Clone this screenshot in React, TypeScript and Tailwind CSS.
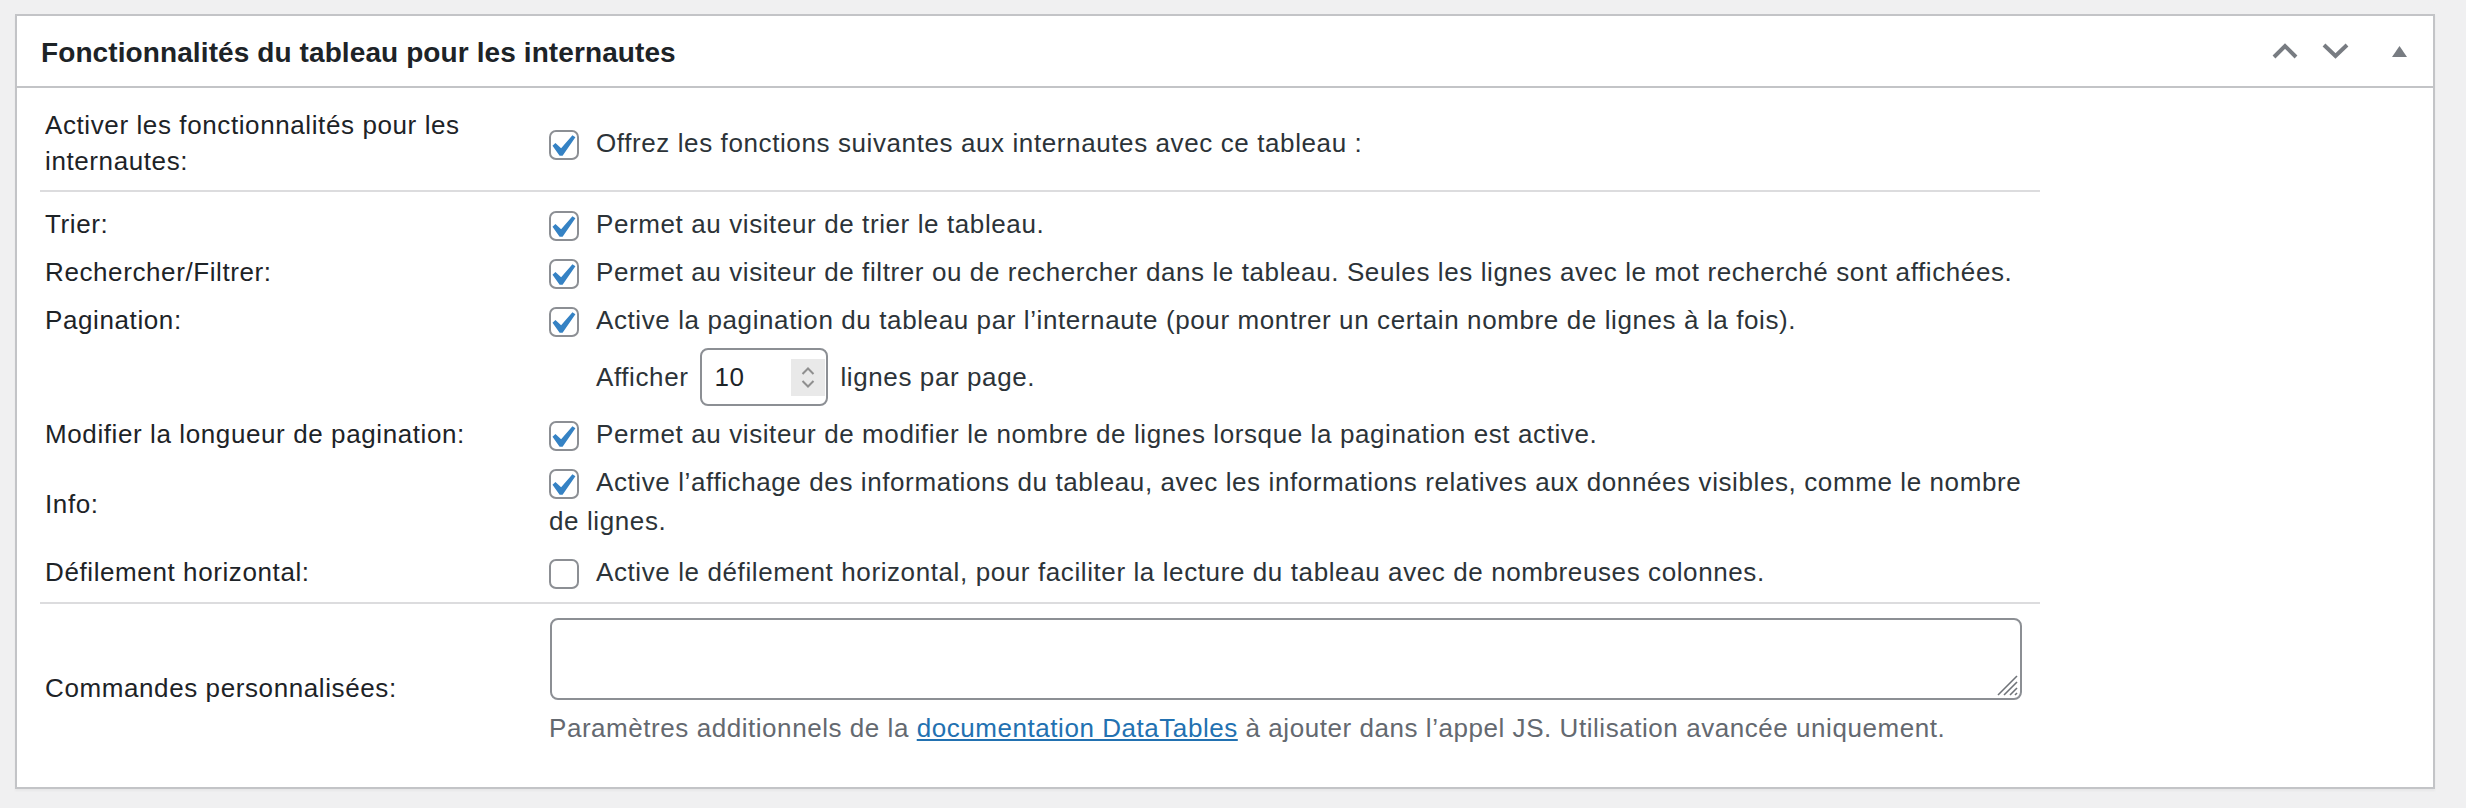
import type { ReactNode } from 'react'

function Checkbox({ checked, tall = false }: { checked: boolean; tall?: boolean }) {
  return (
    <span
      className={`relative mr-[17px] inline-block h-[30px] w-[30px] rounded-[7px] border-2 border-[#8c8f94] bg-white ${
        tall ? 'mb-[5px] align-[-13px]' : 'align-[-8px]'
      }`}
    >
      {checked && (
        <svg viewBox="4.2 2.5 13.6 13.6" className="absolute left-[-2px] top-[-2px] h-[30px] w-[30px]">
          <path d="M14.83 4.89l1.34.94-5.81 8.38H9.02L5.78 9.67l1.34-1.25 2.57 2.4z" fill="#3582c4" />
        </svg>
      )}
    </span>
  )
}

function Row({ label, children, className = '' }: { label?: ReactNode; children: ReactNode; className?: string }) {
  return (
    <div className={`grid w-[2000px] grid-cols-[509px_1fr] items-center ${className}`}>
      <div className="pl-[5px] text-[#1d2327]">{label}</div>
      <div>{children}</div>
    </div>
  )
}

export default function App() {
  return (
    <div className="min-h-screen bg-[#f0f0f1] pl-[15px] pt-[14px] font-['Liberation_Sans',Arial,sans-serif] text-[26px] leading-[34px] tracking-[0.6px] text-[#2c3338]">
      <div className="w-[2420px] border-2 border-[#c3c4c7] bg-white shadow-[0_2px_2px_rgba(0,0,0,0.04)]">
        <div className="flex h-[72px] items-center justify-between border-b-2 border-[#c3c4c7] pl-[24px] pr-[26px]">
          <h2 className="pt-[4px] text-[28px] font-bold leading-[36px] tracking-[0.1px] text-[#1d2327]">
            Fonctionnalités du tableau pour les internautes
          </h2>
          <div className="flex items-center">
            <svg width="26" height="16" viewBox="0 0 26 16" fill="none">
              <polyline points="2,14 13,3 24,14" stroke="#787c82" strokeWidth="4" />
            </svg>
            <svg width="27" height="16" viewBox="0 0 27 16" fill="none" className="ml-[24px]">
              <polyline points="2,2 13.5,13 25,2" stroke="#787c82" strokeWidth="4" />
            </svg>
            <svg width="15" height="11" viewBox="0 0 15 11" className="ml-[43px]">
              <polygon points="0,11 7.5,0 15,11" fill="#787c82" />
            </svg>
          </div>
        </div>

        <div className="pl-[23px]">
          <Row
            className="border-b-2 border-[#dcdcde] pb-[11px] pt-[19px]"
            label={
              <span className="block leading-[36px]">
                Activer les fonctionnalités pour les
                <br />
                internautes:
              </span>
            }
          >
            <Checkbox checked />
            Offrez les fonctions suivantes aux internautes avec ce tableau :
          </Row>

          <div className="w-[2000px] border-b-2 border-[#dcdcde] pb-[6px] pt-[8px]">
            <Row className="py-[7px]" label="Trier:">
              <Checkbox checked />
              Permet au visiteur de trier le tableau.
            </Row>
            <Row className="py-[7px]" label="Rechercher/Filtrer:">
              <Checkbox checked />
              Permet au visiteur de filtrer ou de rechercher dans le tableau. Seules les lignes avec le mot recherché sont affichées.
            </Row>
            <Row className="py-[7px]" label="Pagination:">
              <Checkbox checked />
              Active la pagination du tableau par l’internaute (pour montrer un certain nombre de lignes à la fois).
            </Row>
            <Row className="py-[4px]">
              <div className="flex items-center gap-[12px] pl-[47px]">
                <span>Afficher</span>
                <div className="flex h-[58px] w-[128px] items-center justify-between rounded-[8px] border-2 border-[#8c8f94] pl-[12px] pr-[1px]">
                  <span className="text-[#1d2327]">10</span>
                  <div className="flex h-[37px] w-[34px] flex-col items-center justify-center gap-[5px] bg-[#e9e9e9]">
                    <svg width="14" height="8" viewBox="0 0 14 8" fill="none">
                      <polyline points="1.5,7 7,1.5 12.5,7" stroke="#8f8f8f" strokeWidth="2" />
                    </svg>
                    <svg width="14" height="8" viewBox="0 0 14 8" fill="none">
                      <polyline points="1.5,1 7,6.5 12.5,1" stroke="#8f8f8f" strokeWidth="2" />
                    </svg>
                  </div>
                </div>
                <span>lignes par page.</span>
              </div>
            </Row>
            <Row className="py-[7px]" label="Modifier la longueur de pagination:">
              <Checkbox checked />
              Permet au visiteur de modifier le nombre de lignes lorsque la pagination est active.
            </Row>
            <Row className="pb-[10px] pt-[7px]" label={<span className="block pt-[4px]">Info:</span>}>
              <Checkbox checked tall />
              Active l’affichage des informations du tableau, avec les informations relatives aux données visibles, comme le nombre de lignes.
            </Row>
            <Row className="py-[7px]" label="Défilement horizontal:">
              <Checkbox checked={false} />
              Active le défilement horizontal, pour faciliter la lecture du tableau avec de nombreuses colonnes.
            </Row>
          </div>

          <Row className="pb-[42px] pt-[14px]" label={<span className="block pt-[12px]">Commandes personnalisées:</span>}>
            <div className="relative ml-[1px] w-[1472px]">
              <textarea className="block h-[82px] w-full resize-none rounded-[8px] border-2 border-[#8c8f94] bg-white px-[16px] py-[8px] outline-none" />
              <svg width="24" height="24" viewBox="0 0 24 24" fill="none" className="pointer-events-none absolute bottom-[3px] right-[3px]">
                <line x1="22" y1="3" x2="3" y2="22" stroke="#6f7378" strokeWidth="1.6" />
                <line x1="22" y1="9" x2="9" y2="22" stroke="#6f7378" strokeWidth="1.6" />
                <line x1="22" y1="15" x2="15" y2="22" stroke="#6f7378" strokeWidth="1.6" />
                <line x1="22" y1="20" x2="20" y2="22" stroke="#6f7378" strokeWidth="1.6" />
              </svg>
            </div>
            <p className="mt-[11px] tracking-[0.55px] text-[#646970]">
              Paramètres additionnels de la{' '}
              <a href="#" className="text-[#2271b1] underline">
                documentation DataTables
              </a>{' '}
              à ajouter dans l’appel JS. Utilisation avancée uniquement.
            </p>
          </Row>
        </div>
      </div>
    </div>
  )
}
